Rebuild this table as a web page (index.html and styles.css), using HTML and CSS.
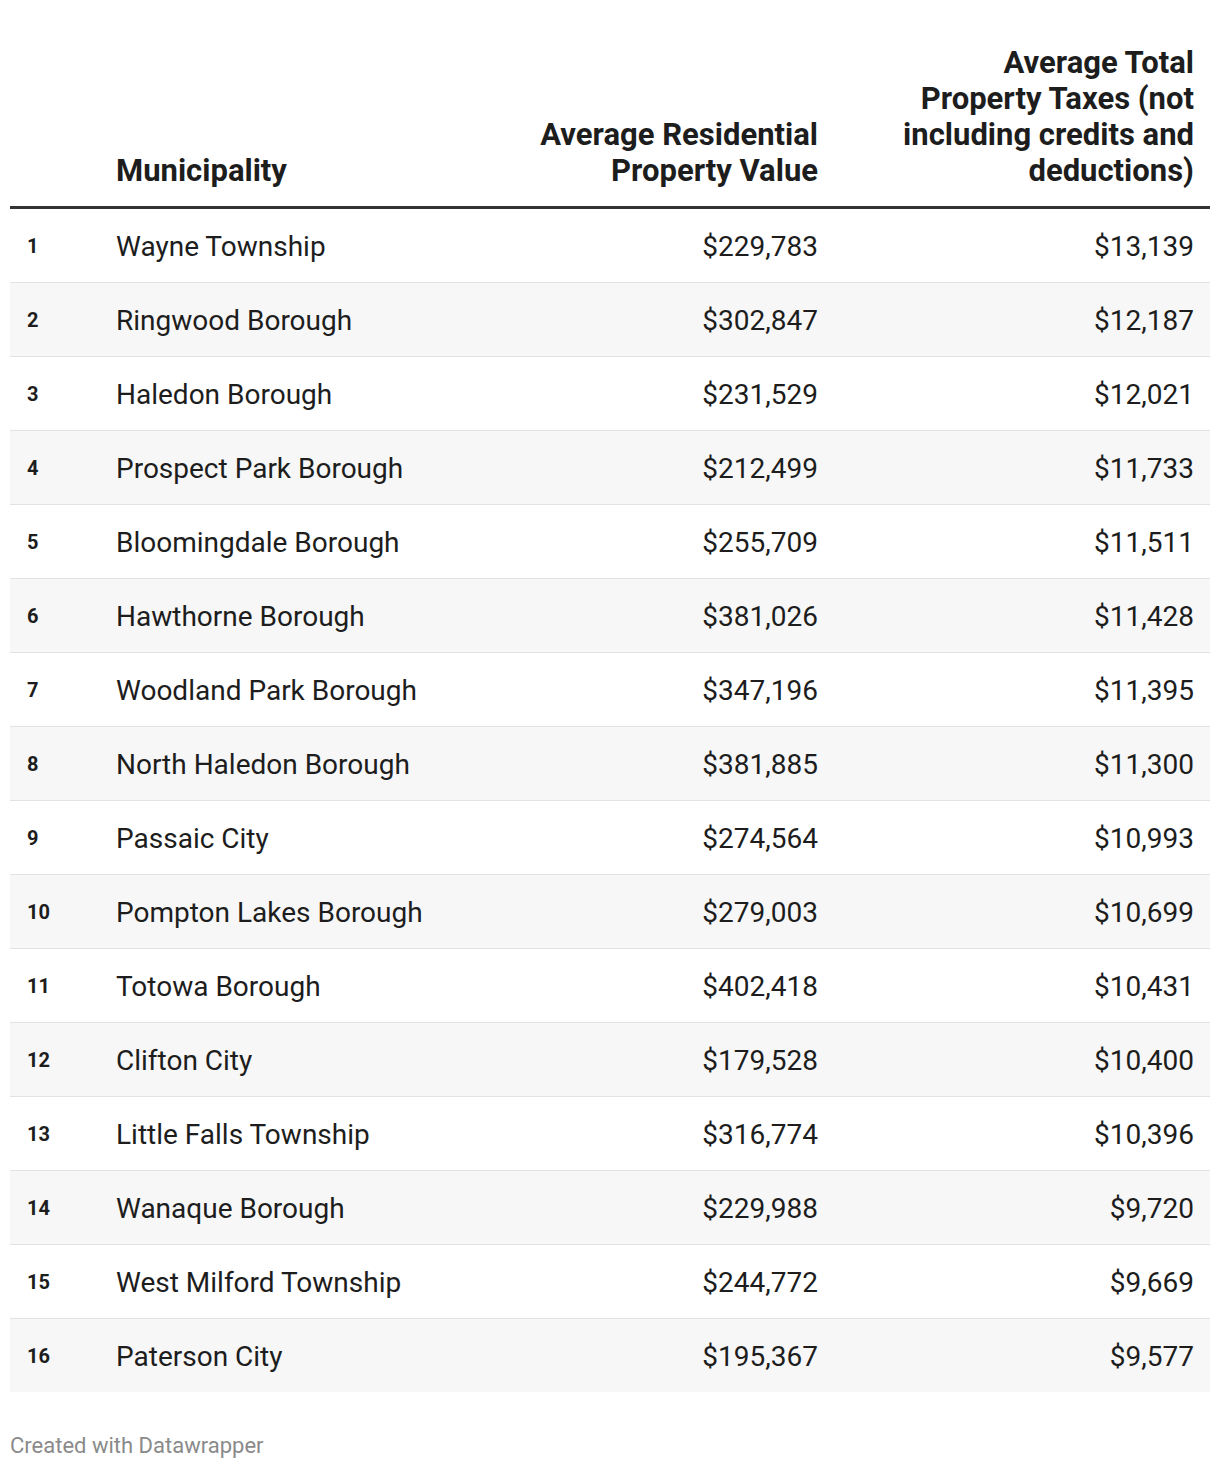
FILE: index.html
```html
<!DOCTYPE html>
<html lang="en">
<head>
<meta charset="utf-8">
<title>Property Taxes</title>
<link rel="stylesheet" href="styles.css">
</head>
<body>
<div class="chart">
  <table class="dw-table">
    <colgroup>
      <col class="c-rank">
      <col class="c-name">
      <col class="c-value">
      <col class="c-tax">
    </colgroup>
    <thead>
      <tr>
        <th class="rank"></th>
        <th class="name">Municipality</th>
        <th class="num">Average Residential<br>Property Value</th>
        <th class="num">Average Total<br>Property Taxes (not<br>including credits and<br>deductions)</th>
      </tr>
    </thead>
    <tbody>
      <tr><td class="rank">1</td><td class="name">Wayne Township</td><td class="num">$229,783</td><td class="num">$13,139</td></tr>
      <tr><td class="rank">2</td><td class="name">Ringwood Borough</td><td class="num">$302,847</td><td class="num">$12,187</td></tr>
      <tr><td class="rank">3</td><td class="name">Haledon Borough</td><td class="num">$231,529</td><td class="num">$12,021</td></tr>
      <tr><td class="rank">4</td><td class="name">Prospect Park Borough</td><td class="num">$212,499</td><td class="num">$11,733</td></tr>
      <tr><td class="rank">5</td><td class="name">Bloomingdale Borough</td><td class="num">$255,709</td><td class="num">$11,511</td></tr>
      <tr><td class="rank">6</td><td class="name">Hawthorne Borough</td><td class="num">$381,026</td><td class="num">$11,428</td></tr>
      <tr><td class="rank">7</td><td class="name">Woodland Park Borough</td><td class="num">$347,196</td><td class="num">$11,395</td></tr>
      <tr><td class="rank">8</td><td class="name">North Haledon Borough</td><td class="num">$381,885</td><td class="num">$11,300</td></tr>
      <tr><td class="rank">9</td><td class="name">Passaic City</td><td class="num">$274,564</td><td class="num">$10,993</td></tr>
      <tr><td class="rank">10</td><td class="name">Pompton Lakes Borough</td><td class="num">$279,003</td><td class="num">$10,699</td></tr>
      <tr><td class="rank">11</td><td class="name">Totowa Borough</td><td class="num">$402,418</td><td class="num">$10,431</td></tr>
      <tr><td class="rank">12</td><td class="name">Clifton City</td><td class="num">$179,528</td><td class="num">$10,400</td></tr>
      <tr><td class="rank">13</td><td class="name">Little Falls Township</td><td class="num">$316,774</td><td class="num">$10,396</td></tr>
      <tr><td class="rank">14</td><td class="name">Wanaque Borough</td><td class="num">$229,988</td><td class="num">$9,720</td></tr>
      <tr><td class="rank">15</td><td class="name">West Milford Township</td><td class="num">$244,772</td><td class="num">$9,669</td></tr>
      <tr><td class="rank">16</td><td class="name">Paterson City</td><td class="num">$195,367</td><td class="num">$9,577</td></tr>
    </tbody>
  </table>
  <div class="footer">Created with Datawrapper</div>
</div>
</body>
</html>
```

FILE: styles.css
```css
html, body {
  margin: 0;
  padding: 0;
  background: #ffffff;
}

body {
  font-family: Roboto, "Liberation Sans", Arial, sans-serif;
  color: #1d1d1d;
}

.chart {
  padding: 45px 10px 0 10px;
}

.dw-table {
  width: 1200px;
  border-collapse: collapse;
  table-layout: fixed;
}

.c-rank { width: 90px; }
.c-name { width: 410px; }
.c-value { width: 324px; }
.c-tax { width: 376px; }

.dw-table th {
  font-size: 31px;
  font-weight: 700;
  line-height: 36px;
  vertical-align: bottom;
  padding: 0 16px 17px 16px;
  border-bottom: 3px solid #333333;
  text-align: left;
  white-space: nowrap;
}

.dw-table th.num {
  text-align: right;
}

.dw-table td {
  font-size: 28px;
  font-weight: 400;
  height: 72px;
  padding: 1px 16px 0 16px;
  vertical-align: middle;
  border-bottom: 1px solid #e3e3e3;
  white-space: nowrap;
}

.dw-table tbody tr:nth-child(even) td {
  background: #f7f7f7;
}

.dw-table tbody tr:last-child td {
  border-bottom: none;
}

.dw-table td.rank {
  font-size: 20px;
  font-weight: 700;
  padding-left: 17px;
}

.dw-table td.num {
  text-align: right;
}

.footer {
  margin-top: 41px;
  font-size: 22px;
  line-height: 26px;
  color: #8a8a8a;
}
```
